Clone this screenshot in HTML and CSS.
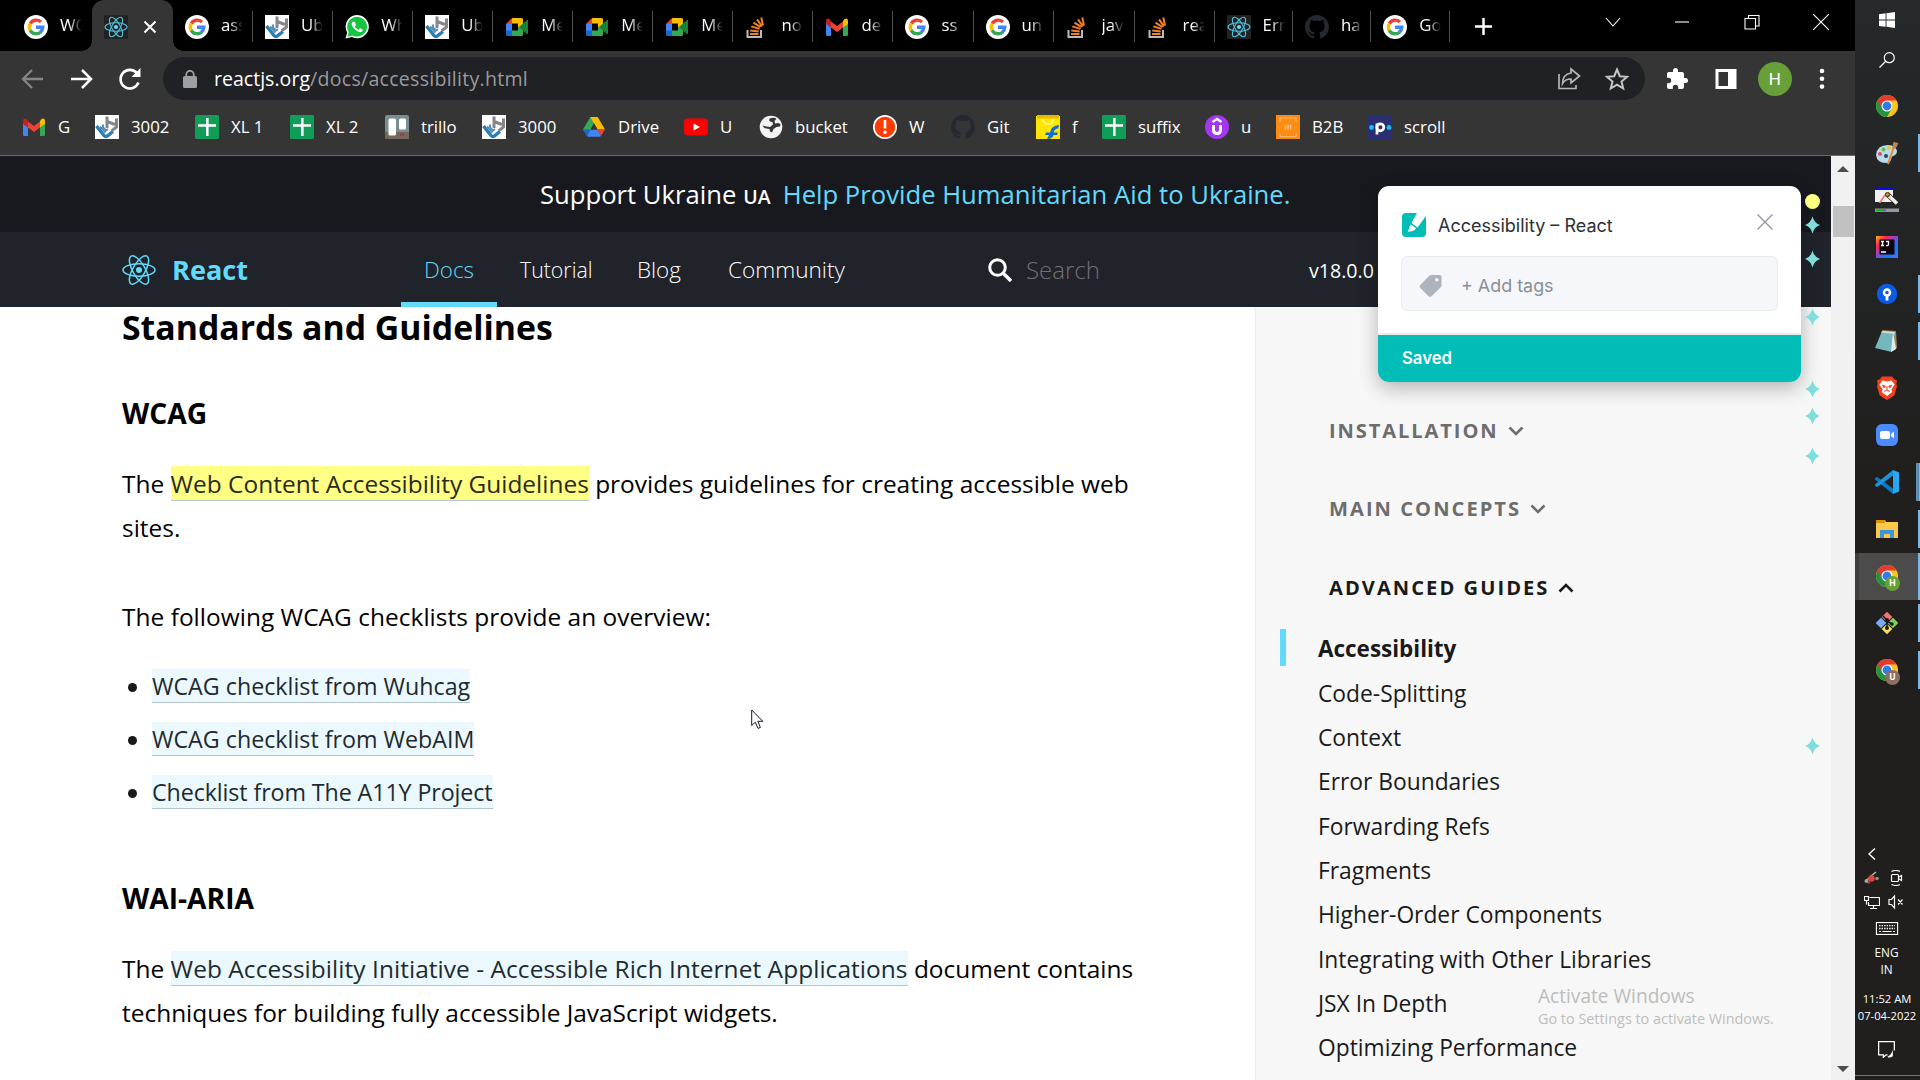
FILE: index.html
```html
<!DOCTYPE html>
<html lang="en">
<head>
<meta charset="utf-8">
<title>Accessibility – React</title>
<link rel="stylesheet" href="styles.css">
</head>
<body>
<svg class="defs" aria-hidden="true">
  <symbol id="google" viewBox="0 0 24 24"><circle cx="12" cy="12" r="12" fill="#fff"/><g fill="none" stroke-width="3.4"><path d="M6.300 8.600A6.800 6.800 0 0 1 16.900 7" stroke="#ea4335"/><path d="M6.300 15.500A6.800 6.800 0 0 1 6.300 8.600" stroke="#fbbc05"/><path d="M16.500 17.200A6.800 6.800 0 0 1 6.200 15.300" stroke="#34a853"/><path d="M12 12.300h6.800A6.800 6.800 0 0 1 16.200 17.400" stroke="#4285f4"/></g></symbol>
  <symbol id="atom" viewBox="0 0 34 30"><g fill="none" stroke="currentColor" stroke-width="1.5"><ellipse cx="17" cy="15" rx="16" ry="6.2"/><ellipse cx="17" cy="15" rx="16" ry="6.2" transform="rotate(60 17 15)"/><ellipse cx="17" cy="15" rx="16" ry="6.2" transform="rotate(120 17 15)"/></g><circle cx="17" cy="15" r="3" fill="currentColor"/></symbol>
  <symbol id="reactfav" viewBox="0 0 24 24"><rect width="24" height="24" rx="1" fill="#222"/><g fill="none" stroke="#53c1de" stroke-width="1.1"><ellipse cx="12" cy="12" rx="11" ry="4.2"/><ellipse cx="12" cy="12" rx="11" ry="4.2" transform="rotate(60 12 12)"/><ellipse cx="12" cy="12" rx="11" ry="4.2" transform="rotate(120 12 12)"/></g><circle cx="12" cy="12" r="2.1" fill="#61dafb"/></symbol>
  <symbol id="uh" viewBox="0 0 24 24"><rect width="24" height="24" fill="#fff"/><path d="M1.500 11l7.500 9.500q1.500 1.800 3.500.3L18 16.500" fill="none" stroke="#2a7db5" stroke-width="3.400"/><path d="M5 11.500l5.500 6M8 9.500v3l3 3 2-1.500" fill="none" stroke="#5b8fb3" stroke-width="2"/><path d="M12 1.500v11.500M12 6.500l8 3M21.500 3.500v8.500l-5 4" fill="none" stroke="#85868a" stroke-width="3"/></symbol>
  <symbol id="whatsapp" viewBox="0 0 24 24"><path d="M.5 23.5l1.7-6A11.6 11.6 0 1 1 7 22z" fill="#fff"/><path d="M2.400 21.700l1.300-4.800A9.900 9.900 0 1 1 7.400 20.400z" fill="#15c53f"/><path d="M8.500 6.500c-2.600.9-2.200 4 .4 6.800s5.900 4.900 8.100 3.100c1.100-1 .9-1.900-.1-2.400l-1.900-.8-1.500 1.500c-1.500-.5-2.900-1.900-3.600-3.300l1.100-1.400-.9-2.500c-.3-.8-.8-1.200-1.600-1z" fill="#fff"/></symbol>
  <symbol id="meet" viewBox="0 0 24 24"><path d="M1 9l6-6v6z" fill="#ea4335"/><path d="M7 3h9.500q1.500 0 1.500 1.500V12h-5V8.500H7z" fill="#fbbc04"/><path d="M1 9h6v7H1z" fill="#4285f4"/><path d="M1 15.500h6V21H2.500Q1 21 1 19.500z" fill="#1967d2"/><path d="M7 15.500h6V12h5v7.500q0 1.500-1.500 1.500H7z" fill="#34a853"/><path d="M14 12l8-7q1-.6 1 .5v13q0 1-1 .5z" fill="#188038"/></symbol>
  <symbol id="stack" viewBox="0 0 24 24"><path d="M2.500 15v7h13.500v-7" fill="none" stroke="#bcbbbb" stroke-width="2"/><g stroke="#f48024" stroke-width="2"><path d="M5 19h8.500M5.200 15.500l8.500 1M6.300 11.400l8.200 2.500M8.500 7.700l7 4.500M12 4.300l5 7M16.300 2.500l1.700 8"/></g></symbol>
  <symbol id="gmail" viewBox="0 0 24 24"><path d="M1 6v13.500q0 1.500 1.500 1.500H6V10z" fill="#4285f4"/><path d="M23 6v13.500q0 1.500-1.500 1.500H18V10z" fill="#34a853"/><path d="M18 6v6.500L23 9V5.500q-.5-3-3.500-1.500z" fill="#fbbc04"/><path d="M6 6.500l6 4.500 6-4.500v6L12 17l-6-4.500z" fill="#ea4335"/><path d="M6 6v6.500L1 9V5.500Q1.500 2.500 4.500 4z" fill="#c5221f"/></symbol>
  <symbol id="github" viewBox="0 0 16 16"><path fill="#24292f" d="M8 0C3.580 0 0 3.580 0 8c0 3.540 2.290 6.530 5.470 7.590.4.070.55-.17.55-.38 0-.19-.01-.82-.01-1.490-2.010.37-2.530-.49-2.690-.94-.09-.23-.48-.94-.82-1.130-.28-.15-.68-.52-.01-.53.63-.01 1.080.58 1.230.82.72 1.210 1.870.87 2.330.66.07-.52.28-.87.51-1.070-1.780-.2-3.640-.89-3.640-3.950 0-.87.31-1.590.82-2.150-.08-.2-.36-1.020.08-2.120 0 0 .67-.21 2.200.82.64-.18 1.320-.27 2-.27s1.360.09 2 .27c1.530-1.040 2.200-.82 2.200-.82.44 1.100.16 1.920.08 2.120.51.56.82 1.270.82 2.150 0 3.070-1.870 3.750-3.650 3.950.29.25.54.73.54 1.480 0 1.070-.01 1.930-.01 2.200 0 .21.15.46.55.38A8 8 0 0 0 16 8c0-4.420-3.580-8-8-8z"/></symbol>
  <symbol id="sheet" viewBox="0 0 24 24"><rect width="24" height="24" rx="1.500" fill="#0f9d58"/><path d="M12.300 3v18M3 10.500h18" stroke="#fff" stroke-width="2.600"/></symbol>
  <symbol id="trello" viewBox="0 0 24 24"><rect width="24" height="24" rx="2" fill="#7a8d93"/><path d="M0 17h24v7H0z" fill="#75685e"/><path d="M15 18h4v3h-4z" fill="#a33c45"/><rect x="3.500" y="3.500" width="7.500" height="17" rx="1.500" fill="#fff"/><rect x="14" y="3.500" width="7" height="11" rx="1.500" fill="#fff"/></symbol>
  <symbol id="drive" viewBox="0 0 24 24"><path d="M8.300 2h7.400l-3.700 6.500L5 21 1 14.500z" fill="#34a853"/><path d="M8.300 2h7.400L23 14.500h-7.400z" fill="#fbbc04"/><path d="M5 21l3.600-6.500h7L19 21q-.5.800-1.500.8h-11Q5.500 21.800 5 21z" fill="#4285f4"/><path d="M15.600 14.500H23L19 21z" fill="#ea4335"/><path d="M1 14.500h7.600L5 21z" fill="#1967d2"/><path d="M12 8.500l3.600 6H8.500z" fill="#353535"/></symbol>
  <symbol id="youtube" viewBox="0 0 24 24"><rect y="3.500" width="24" height="17" rx="4" fill="red"/><path d="M9.500 8.500l6.500 3.500-6.500 3.500z" fill="#fff"/></symbol>
  <symbol id="globe" viewBox="0 0 24 24"><circle cx="12" cy="12" r="11.300" fill="#f1f3f4"/><path d="M10.500 3.500q-1 2 .5 3l2.500.5.500 2.500-3 2.500-3.500-.5-4-1q1 2.500 4 3l3 .5.5 2.500 2 1 1.500-3.500 3-2 3.500-.5.500-2.500-2.500-1-3 .5-.5-2.500 2-2.500q-3-1.500-7-.0z" fill="#353535"/><path d="M4 15q2 5 7 5.500l-2-4z" fill="#f1f3f4"/></symbol>
  <symbol id="alert" viewBox="0 0 24 24"><circle cx="12" cy="12" r="12" fill="#fff"/><circle cx="12" cy="12" r="10.300" fill="#ff3c00"/><path d="M12 5v8.500" stroke="#fff" stroke-width="2.600"/><circle cx="12" cy="17.200" r="1.700" fill="#fff"/></symbol>
  <symbol id="flip" viewBox="0 0 24 24"><path d="M0 1h24v23H0z" fill="#ffe500"/><path d="M1 0h22v3.500H1z" fill="#e8b800"/><path d="M7 4q0 5 5 5t5-5" fill="none" stroke="#fff8a0" stroke-width="1.500"/><path d="M11 24l2-4h-4l1-2.500h4q1-7 9-7.500l-.7 3.500q-4 .3-4.600 4H22L21 20h-3.500q-1 4-6.500 4z" fill="#0d6fd1"/></symbol>
  <symbol id="udemy" viewBox="0 0 24 24"><circle cx="12" cy="12" r="12" fill="#a435f0"/><path d="M7.500 7L12 4l4.500 3" fill="none" stroke="#fff" stroke-width="2.300"/><path d="M8.500 10v5q0 3.500 3.500 3.500t3.500-3.500v-5" fill="none" stroke="#fff" stroke-width="3"/></symbol>
  <symbol id="b2b" viewBox="0 0 24 24"><rect width="24" height="24" fill="#fb8c14"/><path d="M4 7V3h16v4M4 18v3.500h16V18" fill="none" stroke="#fdb566" stroke-width="1.200"/><path d="M9.500 9.500v5M12 9.500v5M14.500 9.500v5" stroke="#fdc98f" stroke-width="1.300"/></symbol>
  <symbol id="pdot" viewBox="0 0 24 24"><rect width="24" height="24" fill="#2a2e72"/><circle cx="3.500" cy="12.500" r="2.400" fill="#14c1f3"/><circle cx="21" cy="12.500" r="2.400" fill="#14c1f3"/><path d="M9 8.500v11" stroke="#fff" stroke-width="2.800"/><circle cx="12.300" cy="12.300" r="3.500" fill="none" stroke="#fff" stroke-width="2.700"/></symbol>
  <symbol id="chrome" viewBox="0 0 24 24"><circle cx="12" cy="12" r="11" fill="#fcc31e"/><path d="M12 12L2.500 6.500A11 11 0 0 0 12 23l5-9z" fill="#229342"/><path d="M2.500 6.500A11 11 0 0 1 21.500 6.500H12l-4.500 8z" fill="#e33b2e"/><circle cx="12" cy="12" r="5.500" fill="#fff"/><circle cx="12" cy="12" r="4.400" fill="#317be8"/></symbol>
  <symbol id="spark" viewBox="0 0 16 18"><path d="M8 0q1.800 7 8 9-6.200 2-8 9-1.800-7-8-9 6.200-2 8-9z" fill="#7fdeda"/></symbol>
</svg>

<div class="desktop">
  <div class="browser">
    <div class="tabstrip">
      <div class="tab bare"><svg><use href="#google"/></svg><span>WC</span></div>
      <div class="tab active"><svg><use href="#reactfav"/></svg><svg class="x" viewBox="0 0 14 14"><path d="M1.500 1.500l11 11M12.500 1.500l-11 11" stroke="#fff" stroke-width="2"/></svg></div>
      <div class="tab"><svg><use href="#google"/></svg><span>ass</span></div>
      <div class="tab"><svg><use href="#uh"/></svg><span>Ub</span></div>
      <div class="tab"><svg><use href="#whatsapp"/></svg><span>Wh</span></div>
      <div class="tab"><svg><use href="#uh"/></svg><span>Ub</span></div>
      <div class="tab"><svg><use href="#meet"/></svg><span>Me</span></div>
      <div class="tab"><svg><use href="#meet"/></svg><span>Me</span></div>
      <div class="tab"><svg><use href="#meet"/></svg><span>Me</span></div>
      <div class="tab"><svg><use href="#stack"/></svg><span>no</span></div>
      <div class="tab"><svg><use href="#gmail"/></svg><span>de</span></div>
      <div class="tab"><svg><use href="#google"/></svg><span>ss</span></div>
      <div class="tab"><svg><use href="#google"/></svg><span>un</span></div>
      <div class="tab wide"><svg><use href="#stack"/></svg><span>jav</span></div>
      <div class="tab"><svg><use href="#stack"/></svg><span>rea</span></div>
      <div class="tab narrow"><svg><use href="#reactfav"/></svg><span>Err</span></div>
      <div class="tab narrow"><svg><use href="#github"/></svg><span>ha</span></div>
      <div class="tab narrow"><svg><use href="#google"/></svg><span>Go</span></div>
      <svg class="newtab" viewBox="0 0 18 18"><path d="M9 0v18M0 9h18" stroke="#fff" stroke-width="2.600"/></svg>
      <div class="winctl">
        <svg viewBox="0 0 16 16"><path d="M1 4l7 8 7-8"/></svg>
        <svg viewBox="0 0 16 16"><path d="M1 8h14"/></svg>
        <svg viewBox="0 0 16 16"><path d="M1 4.500h10.500V15H1zM4.500 4V1.500H15V12h-3"/></svg>
        <svg viewBox="0 0 16 16"><path d="M0 0l16 16M16 0L0 16"/></svg>
      </div>
    </div>

    <div class="toolbar">
      <svg class="ic back" viewBox="0 0 24 24"><path d="M22 12H3M11 3l-9 9 9 9" fill="none" stroke="#868686" stroke-width="2.300"/></svg>
      <svg class="ic" viewBox="0 0 24 24"><path d="M2 12h19M13 3l9 9-9 9" fill="none" stroke="#fff" stroke-width="2.500"/></svg>
      <svg class="ic" viewBox="0 0 24 24"><path d="M20.500 15.500A9.300 9.300 0 1 1 19 6.200" fill="none" stroke="#fff" stroke-width="2.600"/><path d="M22.500 1v9h-9z" fill="#fff"/></svg>
      <div class="omnibox">
        <svg class="lock" viewBox="0 0 14 18"><rect y="6" width="14" height="12" rx="1.500" fill="#9aa0a6"/><path d="M3.300 7V4.500a3.700 3.700 0 0 1 7.400 0V7" fill="none" stroke="#9aa0a6" stroke-width="1.800"/></svg>
        <span class="url"><b>reactjs.org</b><i>/docs/accessibility.html</i></span>
        <svg class="ic share" viewBox="0 0 24 24" fill="none" stroke="#b4b6b9" stroke-width="1.700"><path d="M2 7v14.500h17V18"/><path d="M14 2l8.500 7-8.500 7v-4q-6 0-8.500 4.500 0-9 8.500-10.500z"/></svg>
        <svg class="ic" viewBox="0 0 24 24"><path d="M12 2.500l2.800 6.700 7.200.6-5.500 4.700 1.700 7L12 17.700l-6.200 3.800 1.700-7L2 9.800l7.200-.6z" fill="none" stroke="#c3c5c8" stroke-width="2"/></svg>
      </div>
      <div class="tools">
        <svg class="ic" viewBox="0 0 24 24"><path fill="#fff" d="M20.500 11H19V7c0-1.100-.9-2-2-2h-4V3.500a2.500 2.500 0 0 0-5 0V5H4c-1.100 0-2 .9-2 2v3.800h1.500a2.700 2.700 0 0 1 0 5.400H2V20c0 1.100.9 2 2 2h3.800v-1.500a2.700 2.700 0 0 1 5.400 0V22H17c1.100 0 2-.9 2-2v-4h1.500a2.500 2.500 0 0 0 0-5z"/></svg>
        <svg class="ic" viewBox="0 0 24 24"><path d="M1.500 2h21v20h-21zM4.500 5v14h9.500V5z" fill="#fff" fill-rule="evenodd"/></svg>
        <span class="avatar">H</span>
        <svg class="ic dots" viewBox="0 0 6 24" fill="#fff"><circle cx="3" cy="4" r="2.300"/><circle cx="3" cy="11.800" r="2.300"/><circle cx="3" cy="19.600" r="2.300"/></svg>
      </div>
    </div>

    <div class="bookmarks">
      <div><svg><use href="#gmail"/></svg>G</div>
      <div><svg><use href="#uh"/></svg>3002</div>
      <div><svg><use href="#sheet"/></svg>XL 1</div>
      <div><svg><use href="#sheet"/></svg>XL 2</div>
      <div><svg><use href="#trello"/></svg>trillo</div>
      <div><svg><use href="#uh"/></svg>3000</div>
      <div><svg><use href="#drive"/></svg>Drive</div>
      <div><svg><use href="#youtube"/></svg>U</div>
      <div><svg><use href="#globe"/></svg>bucket</div>
      <div><svg><use href="#alert"/></svg>W</div>
      <div><svg><use href="#github"/></svg>Git</div>
      <div><svg><use href="#flip"/></svg>f</div>
      <div><svg><use href="#sheet"/></svg>suffix</div>
      <div><svg><use href="#udemy"/></svg>u</div>
      <div><svg><use href="#b2b"/></svg>B2B</div>
      <div><svg><use href="#pdot"/></svg>scroll</div>
    </div>

    <div class="viewport">
      <div class="page">
        <div class="banner"><span class="support">Support Ukraine</span><span class="flag">UA</span><a>Help Provide Humanitarian Aid to Ukraine.</a></div>
        <header class="nav">
          <div class="brand"><svg><use href="#atom"/></svg>React</div>
          <nav><a class="on">Docs</a><a class="tut">Tutorial</a><a class="blog">Blog</a><a class="com">Community</a></nav>
          <div class="search"><svg viewBox="0 0 24 24"><circle cx="9.500" cy="9.500" r="7.800" fill="none" stroke="#fff" stroke-width="3"/><path d="M15 15l8 8" stroke="#fff" stroke-width="3.400"/></svg>Search</div>
          <span class="version">v18.0.0</span>
        </header>
        <div class="columns">
          <main>
            <h2>Standards and Guidelines</h2>
            <h3>WCAG</h3>
            <p>The <a class="marked">Web Content Accessibility Guidelines</a> provides guidelines for creating accessible web<br>sites.</p>
            <p class="next">The following WCAG checklists provide an overview:</p>
            <ul>
              <li><a>WCAG checklist from Wuhcag</a></li>
              <li><a>WCAG checklist from WebAIM</a></li>
              <li><a class="tight">Checklist from The A11Y Project</a></li>
            </ul>
            <h3 class="second">WAI-ARIA</h3>
            <p>The <a class="loose">Web Accessibility Initiative - Accessible Rich Internet Applications</a> document contains<br>techniques for building fully accessible JavaScript widgets.</p>
          </main>
          <aside>
            <h4>INSTALLATION <svg viewBox="0 0 16 10"><path d="M1.500 1.500L8 8l6.500-6.500"/></svg></h4>
            <h4>MAIN CONCEPTS <svg viewBox="0 0 16 10"><path d="M1.500 1.500L8 8l6.500-6.500"/></svg></h4>
            <h4 class="open">ADVANCED GUIDES <svg viewBox="0 0 16 10"><path d="M1.500 8.500L8 2l6.500 6.500"/></svg></h4>
            <ul>
              <li class="current">Accessibility</li>
              <li>Code-Splitting</li>
              <li>Context</li>
              <li>Error Boundaries</li>
              <li>Forwarding Refs</li>
              <li>Fragments</li>
              <li>Higher-Order Components</li>
              <li>Integrating with Other Libraries</li>
              <li>JSX In Depth</li>
              <li>Optimizing Performance</li>
            </ul>
          </aside>
        </div>
      </div>
      <div class="scrollbar">
        <svg viewBox="0 0 12 6"><path d="M0 6l6-6 6 6z"/></svg>
        <div class="thumb"></div>
        <svg class="down" viewBox="0 0 12 6"><path d="M0 0l6 6 6-6z"/></svg>
      </div>
    </div>
  </div>

  <div class="taskbar">
    <div class="task start"><svg viewBox="0 0 16 16" fill="#fff"><path d="M0 2.200l6.600-.9v6.300H0zM7.500 1.200L16 0v7.600H7.500zM0 8.500h6.600v6.300L0 13.900zM7.500 8.500H16V16l-8.500-1.200z"/></svg></div>
    <div class="task find"><svg viewBox="0 0 16 16" fill="none" stroke="#fff" stroke-width="1.200"><circle cx="10.300" cy="5.700" r="5"/><path d="M6.500 9.500L.5 15.500"/></svg></div>
    <div class="task"><svg><use href="#chrome"/></svg></div>
    <div class="task run"><svg viewBox="0 0 24 24"><path d="M1 14Q2 4 13 4q8 0 9 6 0 4-4 5-2 1-2 4-1 3-5 3-9 0-10-8z" fill="#b9dcec"/><circle cx="5" cy="13" r="2" fill="#e25050"/><circle cx="8.500" cy="8.500" r="2" fill="#69b944"/><circle cx="14" cy="7" r="2" fill="#f0bd3c"/><circle cx="11" cy="15" r="2" fill="#25475f"/><path d="M13 23l5.500-16" stroke="#e88a35" stroke-width="2"/><path d="M17 7l1.500-6 5 1-3 6z" fill="#b98557"/></svg></div>
    <div class="task"><svg viewBox="0 0 24 24"><path d="M0 0h18v2H0z" fill="#0710e8"/><path d="M0 2h18v12H0z" fill="#f1f1f1"/><path d="M4.500 15l5.500-8" stroke="#f0797c" stroke-width="1.600"/><path d="M12 6l10 9.500" stroke="#222" stroke-width="5"/><path d="M12 6l10 9.500" stroke="#f4efe6" stroke-width="3.600"/><circle cx="12.500" cy="6.500" r="2.600" fill="#5e4a22"/><circle cx="12.500" cy="6.500" r="1.200" fill="#f0a21c"/><path d="M0 20.500h24v3.500H0z" fill="#999"/><path d="M1 21.200h7v2H1z" fill="#19b019"/><path d="M8 21.200h3v2H8z" fill="#5b5bee"/></svg></div>
    <div class="task"><svg viewBox="0 0 24 24"><defs><linearGradient id="ij" x2="1" y2="1"><stop stop-color="#fdb60d"/><stop offset=".25" stop-color="#fe2857"/><stop offset=".5" stop-color="#7a4fd8"/><stop offset=".7" stop-color="#087cfa"/><stop offset="1" stop-color="#5a6df5"/></linearGradient></defs><path d="M1 1h22v22H1z" fill="url(#ij)"/><path d="M4.500 4.500h15v15h-15z" fill="#11050f"/><path d="M6 6.500h3M7.500 6.500v4M6 10.500h3M11 6.500h2.500v3q0 1.200-2.500 1M6 17h5" fill="none" stroke="#fff" stroke-width="1.300"/></svg></div>
    <div class="task run"><svg viewBox="0 0 24 24"><circle cx="12" cy="12" r="10.200" fill="#0b5be6"/><circle cx="12" cy="10.500" r="3" fill="none" stroke="#fff" stroke-width="2.500"/><path d="M12 13v5.500" stroke="#fff" stroke-width="2.800"/></svg></div>
    <div class="task run"><svg viewBox="0 0 24 24"><path d="M7 1l14 1 1 17-4 3z" fill="#a8844f"/><path d="M7 2l13 1-3 20L0 19z" fill="#76b7bf"/><path d="M18 3l3 17-5 3z" fill="#d9eef0"/><path d="M7 2l13 1-.5 2L6.500 3.500z" fill="#d8dcdc"/></svg></div>
    <div class="task"><svg viewBox="0 0 24 24"><path d="M7 .5h10l2 2.500 3 1.500-.7 3.500.7 2-2.500 9Q16 22 12 24q-4-2-7.500-5L2 10l.7-2L2 4.500 5 3z" fill="#f2411c"/><path d="M7.500 4.500l4.500 1 4.500-1 3 4-3 5 .7 2.500L12 20l-5.200-4 .7-2.500-3-5z" fill="#fff"/><path d="M7 9l3.500 1-1.500 2zM17 9l-3.500 1 1.500 2z" fill="#f2411c" stroke="#f2411c" stroke-width=".6"/><path d="M12 10v4M9 15.500l3-1.500 3 1.500" fill="none" stroke="#f2411c"/></svg></div>
    <div class="task"><svg viewBox="0 0 24 24"><rect x="1" y="1" width="22" height="22" rx="6" fill="#4a8cff"/><rect x="5" y="8" width="10" height="8" rx="2" fill="#fff"/><path d="M16 11l3-2.500v7L16 13z" fill="#fff"/></svg></div>
    <div class="task run multi"><svg viewBox="0 0 24 24"><path d="M0 8.500l2-1.700L18 18.500V24L0 9.500z" fill="#0b78c1"/><path d="M0 15.500l2 1.700L18 5.500V0L0 14.500z" fill="#1b93d8"/><path d="M18 0l6 2.500v19L18 24z" fill="#27a9f2"/></svg></div>
    <div class="task run"><svg viewBox="0 0 24 24"><path d="M1 3h9l1 2h12v16H1z" fill="#fbc94a"/><path d="M1 3h9v3H1z" fill="#d99510"/><path d="M5 13h14v8h-4v-4H9v4H5z" fill="#3a96dd"/></svg></div>
    <div class="task run focus"><svg><use href="#chrome"/></svg><span class="who">H</span></div>
    <div class="task run"><svg viewBox="0 0 24 24"><g transform="rotate(45 12 12)"><path d="M4 4h7.500v7.500H4z" fill="#f27378"/><path d="M12.500 4H20v7.500h-7.500z" fill="#7fd15a"/><path d="M4 12.500h7.500V20H4z" fill="#78acf4"/><path d="M12.500 12.500H20V20h-7.500z" fill="#fbdc68"/></g><path d="M8 5l4 4v8M12 10l5 3" stroke="#1c1c1c" stroke-width="1.600" fill="none"/><circle cx="12" cy="9" r="2" fill="#1c1c1c"/><circle cx="12" cy="17" r="2" fill="#1c1c1c"/><circle cx="17" cy="13" r="1.800" fill="#1c1c1c"/></svg></div>
    <div class="task run"><svg><use href="#chrome"/></svg><span class="who brown">U</span></div>
    <div class="tray">
      <svg class="up" viewBox="0 0 8 12"><path d="M7 .5L1 6l6 5.500" fill="none" stroke="#fff" stroke-width="1.400"/></svg>
      <div class="pair">
        <svg viewBox="0 0 16 16"><path d="M2 11l5-5 5-4" stroke="#b9b9b9" stroke-width="1.500"/><circle cx="7.500" cy="8.500" r="3.200" fill="#e0443a"/><circle cx="2.500" cy="11" r="2" fill="#a8a8a8"/><circle cx="13" cy="8.500" r="1.800" fill="#8d9292"/><circle cx="5" cy="12.500" r="1.300" fill="#c33"/></svg>
        <svg viewBox="0 0 16 16" fill="none" stroke="#fff" stroke-width="1.200"><rect x="3.500" y="4.500" width="7" height="7" rx="1"/><path d="M11 7l2.500-1.500v5L11 9M3.500 1.500Q8-.500 12 1.500M3.500 14.500Q8 16.500 12 14.500"/></svg>
      </div>
      <div class="pair">
        <svg viewBox="0 0 16 16" fill="none" stroke="#fff" stroke-width="1.200"><path d="M5.500 3.500h10v8H4.500V8M9.500 11.500v2.500M6 14.500h7M.5 2.500h4v4h-4zM2.500 6.500v4"/></svg>
        <svg viewBox="0 0 16 16" fill="none" stroke="#fff" stroke-width="1.200"><path d="M1 5.500h2.500l3-3.500v12l-3-3.500H1zM10 5.500l4.500 5M14.500 5.500l-4.500 5"/></svg>
      </div>
      <svg class="keys" viewBox="0 0 24 14"><rect x=".6" y=".6" width="22.800" height="12.800" fill="none" stroke="#fff" stroke-width="1.200"/><path d="M3.500 4h17M3.500 7h17" stroke="#fff" stroke-width="1.400" stroke-dasharray="1.500 1.200"/><path d="M3.500 10.300h2M7 10.300h10M18.500 10.300h2" stroke="#fff" stroke-width="1.200"/></svg>
      <div class="lang">ENG<br>IN</div>
      <div class="clock">11:52 AM<br>07-04-2022</div>
      <svg class="action" viewBox="0 0 16 16"><path d="M9 13H7.500L5 15.500V13H.600V.600h14.800V9" fill="none" stroke="#fff" stroke-width="1.200"/><path d="M14 8.500v4.500q0 3-4 2.500-1-.2-1-1 3-.5 5-6z" fill="#fff"/></svg>
    </div>
  </div>
</div>

<div class="popup">
  <div class="popup-head">
    <svg class="mark" viewBox="0 0 24 24"><rect width="24" height="24" rx="4" fill="#00bdb8"/><path d="M15 0h9v3l-8.500 11.500-6-4.500z" fill="#fff"/><path d="M9 11l5.500 4.200-3 2.600-5.800 1.200L8 13z" fill="#fff"/><path d="M8.500 10.500l6.500 5" stroke="#00bdb8" stroke-width="1"/></svg>
    <span>Accessibility – React</span>
    <svg class="close" viewBox="0 0 16 16"><path d="M.5.5l15 15M15.500.5l-15 15" stroke="#8f959e" stroke-width="1.300"/></svg>
  </div>
  <div class="tags"><svg viewBox="0 0 22 22"><path d="M11.500 0H20q2 0 2 2v8.500q0 1-1 2L12 21.200q-1.500 1.300-3 0L.8 13q-1.300-1.500 0-3L9.500 1q.8-1 2-1zm5.800 3a1.800 1.800 0 1 0 0 3.600 1.800 1.800 0 0 0 0-3.600z" fill="#afb3bd"/></svg>+ Add tags</div>
  <div class="saved">Saved</div>
</div>

<i class="dot"></i>
<svg class="spark s1"><use href="#spark"/></svg>
<svg class="spark s2"><use href="#spark"/></svg>
<svg class="spark s3"><use href="#spark"/></svg>
<svg class="spark s4"><use href="#spark"/></svg>
<svg class="spark s5"><use href="#spark"/></svg>
<svg class="spark s6"><use href="#spark"/></svg>
<svg class="spark s7"><use href="#spark"/></svg>
<svg class="cursor" viewBox="0 0 13 20"><path d="M.7 1v15.500l3.600-3.300 2.700 6.200 2.400-1-2.600-6.100h5z" fill="#fff" stroke="#15152a" stroke-width="1"/></svg>
<div class="watermark"><b>Activate Windows</b><span>Go to Settings to activate Windows.</span></div>
</body>
</html>
```
FILE: styles.css
```css
* { box-sizing: border-box; }
body {
  margin: 0;
  width: 1920px;
  height: 1080px;
  overflow: hidden;
  position: relative;
  font-family: "Open Sans", "Noto Sans", sans-serif;
}
svg { display: block; flex: none; }
.defs { position: absolute; width: 0; height: 0; }
h2, h3, h4, p, ul { margin: 0; padding: 0; }
ul { list-style: none; }

.desktop { display: flex; height: 1080px; }
.browser { width: 1855px; display: flex; flex-direction: column; background: #353535; }

/* tab strip */
.tabstrip { display: flex; height: 51px; background: #000; padding-left: 12px; color: #fff; font-size: 16.800px; }
.tab { width: 80.050px; height: 51px; padding: 2px 0 0 12px; display: flex; align-items: center; gap: 12px; position: relative; }
.tab svg { width: 24px; height: 24px; }
.tab.wide { width: 81px; }
.tab.narrow { width: 78.300px; }
.tab span {
  width: 22px;
  overflow: hidden;
  white-space: nowrap;
  line-height: 28px;
  margin-top: -3px;
  -webkit-mask-image: linear-gradient(90deg, #000 40%, transparent);
  mask-image: linear-gradient(90deg, #000 40%, transparent);
}
.tab::after { content: ""; position: absolute; right: 0; top: 11px; width: 1px; height: 31px; background: #505050; }
.tab.bare::after, .tab.active::after { display: none; }
.tab.active { width: 81px; background: #353535; border-radius: 12px 12px 0 0; gap: 15px; }
.tab.active::before {
  content: "";
  position: absolute;
  left: -10px; right: -10px; bottom: 0;
  height: 10px;
  background:
    radial-gradient(circle at 0 0, transparent 9.500px, #353535 10px) left / 10px 10px no-repeat,
    radial-gradient(circle at 100% 0, transparent 9.500px, #353535 10px) right / 10px 10px no-repeat;
}
.tab .x { width: 14px; height: 14px; }
.newtab { width: 17px; height: 17px; margin: 18px 0 0 25px; }
.winctl { margin-left: auto; padding: 14px 26px 0 0; display: flex; gap: 53.500px; }
.winctl svg { width: 16px; height: 16px; fill: none; stroke: #fff; stroke-width: 1.100; }

/* toolbar */
.toolbar { height: 55px; display: flex; align-items: center; padding: 0 0 0 21px; }
.ic { width: 24px; height: 24px; }
.toolbar > .ic { margin-right: 24.300px; }
.omnibox { width: 1482px; height: 43px; margin-left: -3px; border-radius: 22px; background: #202124; display: flex; align-items: center; padding: 0 16px 0 20px; }
.lock { width: 14px; height: 18px; margin-right: 17px; }
.url { flex: 1; font-size: 19.600px; }
.url b { font-weight: 400; color: #fff; }
.url i { font-style: normal; color: #9a9a9d; letter-spacing: .25px; }
.share { margin-right: 24px; }
.tools { display: flex; align-items: center; padding-left: 20px; }
.tools .ic { margin-right: 25px; }
.avatar { width: 34px; height: 34px; border-radius: 50%; background: #689f38; color: #fff; font: 17px/34px Roboto, sans-serif; text-align: center; margin: 0 27px 0 -5px; }
.tools .dots { width: 6px; margin: 0; }

/* bookmarks */
.bookmarks {
  height: 50px;
  padding: 0 0 8px 22px;
  display: grid;
  grid-template-columns: 73px 100px 95px 95px 97px 100px 102px 75px 114px 78px 85px 66px 103px 71px 92px 100px;
  align-items: center;
  border-bottom: 1px solid #6a6a6a;
  color: #fff;
  font-size: 16.800px;
}
.bookmarks div { display: flex; align-items: center; gap: 12px; }
.bookmarks svg { width: 24px; height: 24px; }

/* page */
.viewport { flex: 1; display: flex; min-height: 0; }
.page { width: 1831px; display: flex; flex-direction: column; background: #fff; }
.banner { height: 76px; padding-left: 540px; background: #18191f; color: #fff; font-size: 25.650px; line-height: 77px; display: flex; white-space: nowrap; }
.banner a { color: #61dafb; }
.flag { font-size: 19.500px; font-weight: 600; line-height: 81px; margin: 0 12px 0 7px; }
.nav { height: 75px; background: #20232a; display: flex; align-items: center; color: #fff; font-size: 22.400px; }
.brand { width: 279px; margin-left: 122px; display: flex; align-items: center; gap: 16px; color: #61dafb; font-size: 27.100px; font-weight: 700; }
.brand svg { width: 34px; height: 30px; }
.nav nav { display: flex; height: 75px; line-height: 76px; font-weight: 300; }
.nav nav a { padding-left: 23px; }
.nav nav .on { width: 96px; padding: 0; text-align: center; color: #61dafb; border-bottom: 5px solid #61dafb; }
.nav nav .tut { width: 117px; font-size: 21.300px; }
.nav nav .blog { width: 91px; }
.nav nav .com { width: 140px; font-size: 22.600px; }
.search { margin-left: 143px; display: flex; gap: 14px; align-items: center; color: #6d7078; font-weight: 300; font-size: 24px; width: 121px; }
.search svg { width: 24px; height: 24px; }
.version { margin-left: 200px; font-size: 19.600px; padding-top: 1px; }

.columns { flex: 1; display: flex; min-height: 0; overflow: hidden; }
main { width: 1255px; padding-left: 122px; color: #1a1a1a; }
h2 { margin-top: -2px; font-size: 33.800px; line-height: 44px; color: #000; }
h3 { margin-top: 46px; font-size: 28.200px; line-height: 36px; color: #000; }
h3.second { margin-top: 61.500px; }
main p { margin-top: 31.400px; font-size: 24.450px; line-height: 43.700px; color: #000; white-space: nowrap; }
main p.next { margin-top: 45.500px; letter-spacing: .03px; }
main a { background: #ebf9fe; color: #1f2a2e; border-bottom: 1.500px solid #b4c5cc; padding-top: 1px; }
main a.marked { background: #ffff83; color: #2a2a1a; }
main a.tight { letter-spacing: -.1px; }
main a.loose { letter-spacing: .06px; }
main ul { margin-top: 20.500px; }
main li { display: flex; align-items: center; height: 53px; font-size: 23.250px; }
main li::before { content: ""; width: 9px; height: 9px; border-radius: 50%; background: #1a1a1a; margin: 2px 15px 0 6px; }

aside { flex: 1; background: #f7f7f7; border-left: 1px solid #ececec; padding: 109px 0 0 73px; }
h4 { display: flex; align-items: center; height: 30px; margin-bottom: 48.400px; font-size: 20.100px; line-height: 30px; letter-spacing: 2.050px; color: #6d6d6d; white-space: nowrap; }
h4:first-child { letter-spacing: 1.900px; }
h4 svg { width: 16px; height: 10px; margin-left: 9px; fill: none; stroke: currentColor; stroke-width: 2.600; }
h4.open { color: #1a1a1a; margin-bottom: 23.500px; }
aside ul { margin-left: -49px; }
aside li { height: 44.330px; line-height: 45.300px; font-size: 22.800px; color: #1a1a1a; padding-left: 38px; white-space: nowrap; }
.current { font-weight: 700; position: relative; font-size: 22.480px; }
.current::before { content: ""; position: absolute; left: 0; top: 3px; width: 6px; height: 37px; background: #61dafb; }

.scrollbar { width: 24px; background: #f1f1f1; display: flex; flex-direction: column; align-items: center; padding: 10px 0 8px; }
.scrollbar svg { width: 12px; height: 6px; fill: #4d4d4d; }
.thumb { width: 21px; height: 31px; margin-top: 34px; background: #c1c1c1; }
.down { margin-top: auto; }

/* taskbar */
.taskbar { width: 65px; background: linear-gradient(#25292b, #201f1e 45%, #211f1d); display: flex; flex-direction: column; color: #fff; }
.task { height: 47px; flex: none; display: flex; align-items: center; justify-content: center; position: relative; padding-right: 2px; }
.task svg { width: 24px; height: 24px; }
.task.start { height: 40px; }
.task.find { height: 42.500px; padding-bottom: 3px; }
.start svg, .find svg { width: 16px; height: 16px; }
.run::after { content: ""; position: absolute; right: 0; top: 4px; width: 2px; height: 38px; background: #76b9ed; }
.multi::after { width: 4px; background: linear-gradient(90deg, #5d8fb8 50%, #3a5a73 50%, #76b9ed 75%); }
.focus { background: #4b4b4b; border-left: 4px solid #3d3d3d; padding-right: 5px; }
.focus::after { top: 0; height: 47px; }
.who { position: absolute; left: 30px; top: 23px; width: 15px; height: 15px; border-radius: 50%; background: #689f38; font: 700 9px/15px Roboto, sans-serif; text-align: center; }
.focus .who { left: 26px; }
.brown { background: #8d6e63; }
.tray { margin-top: auto; height: 232px; display: flex; flex-direction: column; align-items: center; border-bottom: 1px solid #777; margin-bottom: 4px; }
.up { width: 8px; height: 12px; margin: 4px 32px 0 0; }
.pair { display: flex; gap: 8px; margin-top: 8px; padding-right: 8px; }
.up + .pair { margin-top: 10px; }
.pair svg { width: 16px; height: 16px; }
.keys { width: 24px; height: 13px; margin: 12px 2px 0 0; }
.lang { margin-top: 9px; padding-right: 2px; font-size: 11.800px; line-height: 17px; text-align: center; }
.clock { margin-top: 12px; padding-right: 1px; font-size: 11.200px; line-height: 17px; text-align: center; white-space: nowrap; }
.action { width: 17px; height: 17px; margin: 17px 2px 0 0; }

/* highlighter popup */
.popup { position: absolute; left: 1378px; top: 186px; width: 423px; height: 196px; border-radius: 11px; background: #fff; overflow: hidden; font-family: Inter, sans-serif; box-shadow: 0 6px 20px rgba(0, 0, 0, .28); display: flex; flex-direction: column; }
.popup-head { height: 70px; padding: 12px 28px 0 24px; display: flex; align-items: center; font-size: 18px; color: #2b2f38; }
.mark { width: 24px; height: 24px; margin-top: -4px; margin-right: 12px; }
.popup-head span { padding-bottom: 4px; }
.close { width: 16px; height: 16px; margin: -11px 0 0 auto; }
.tags { margin: 0 23px; height: 55px; border: 1px solid #e9edf1; border-radius: 6px; background: #f6f7fa; display: flex; align-items: center; gap: 19px; padding: 4px 0 0 17px; color: #8a8e97; font-size: 17.900px; }
.tags svg { width: 23px; height: 22px; }
.saved { margin-top: auto; height: 49px; border-top: 2px solid #e8eef0; background: #00bdb8; background-clip: padding-box; color: #fff; font-size: 16.700px; font-weight: 600; line-height: 47px; padding-left: 24px; }

/* page markers */
.dot { position: absolute; left: 1805px; top: 194px; width: 15px; height: 15px; border-radius: 50%; background: #ffff83; }
.spark { position: absolute; left: 1805px; width: 15px; height: 18px; }
.s1 { top: 216px; }
.s2 { top: 250px; }
.s3 { top: 308px; }
.s4 { top: 380px; }
.s5 { top: 407px; }
.s6 { top: 447px; }
.s7 { top: 737px; }
.cursor { position: absolute; left: 751px; top: 709px; width: 13px; height: 20px; }
.watermark { position: absolute; left: 1538px; top: 983px; color: #bdbdbd; display: flex; flex-direction: column; font-size: 14.400px; line-height: 19px; white-space: nowrap; }
.watermark b { font-weight: 400; font-size: 19.100px; line-height: 26px; }
```
